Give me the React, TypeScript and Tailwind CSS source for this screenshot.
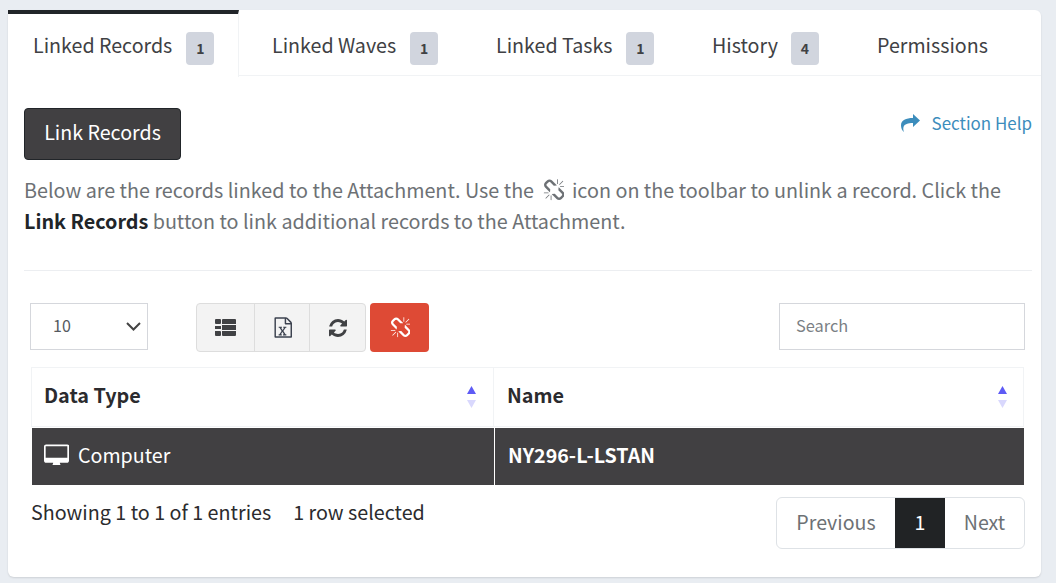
const font = { fontFamily: '"Noto Sans CJK SC", "Noto Sans", sans-serif' };

function UnlinkIcon({ className }: { className: string }) {
  return (
    <svg viewBox="0 0 1664 1792" fill="currentColor" className={className}>
      <path d="M503 1271l-256 256q-10 9-23 9-12 0-23-9-9-10-9-23t9-23l256-256q10-9 23-9t23 9q9 10 9 23t-9 23zm169 41v320q0 14-9 23t-23 9-23-9-9-23v-320q0-14 9-23t23-9 23 9 9 23zm-224-224q0 14-9 23t-23 9h-320q-14 0-23-9t-9-23 9-23 23-9h320q14 0 23 9t9 23zm1264 128q0 120-85 203l-147 146q-83 83-203 83-121 0-204-85l-334-335q-21-21-42-56l239-18 273 274q27 27 68 27.500t68-26.500l147-146q28-28 28-67 0-40-28-68l-274-275 18-239q35 21 56 42l336 336q84 86 84 204zm-617-724l-239 18-273-274q-28-28-68-28-39 0-68 27l-147 146q-28 28-28 67 0 40 28 68l274 274-18 240q-35-21-56-42l-336-336q-84-86-84-204 0-120 85-203l147-146q83-83 203-83 121 0 204 85l334 335q21 21 42 56zm633 84q0 14-9 23t-23 9h-320q-14 0-23-9t-9-23 9-23 23-9h320q14 0 23 9t9 23zm-544-544v320q0 14-9 23t-23 9-23-9-9-23v-320q0-14 9-23t23-9 23 9 9 23zm407 151l-256 256q-11 9-23 9t-23-9q-9-10-9-23t9-23l256-256q10-9 23-9t23 9q9 10 9 23t-9 23z" />
    </svg>
  );
}

function ShareIcon({ className }: { className: string }) {
  return (
    <svg viewBox="0 0 19 18" fill="currentColor" className={className}>
      <path d="M12 0 L19 6.500 L12 13 V9 C7 9 3.500 10 2.500 13 C2 15 2.500 17 3 18 C1 16.500 0 14 0 11.500 C0 6 5 4 12 4 Z" />
    </svg>
  );
}

function ListIcon({ className }: { className: string }) {
  return (
    <svg viewBox="0 0 21 17" fill="currentColor" className={className}>
      <path d="M0 1 a1 1 0 0 1 1-1 h4 a1 1 0 0 1 1 1 v3 a1 1 0 0 1-1 1 h-4 a1 1 0 0 1-1-1 z M0 7 h6 v3 h-6 z M0 12 h5 a1 1 0 0 1 1 1 v3 a1 1 0 0 1-1 1 h-4 a1 1 0 0 1-1-1 z M7 1 a1 1 0 0 1 1-1 h12 a1 1 0 0 1 1 1 v4 h-14 z M7 6 h14 v5 h-14 z M7 12 h14 v4 a1 1 0 0 1-1 1 h-12 a1 1 0 0 1-1-1 z" />
    </svg>
  );
}

function ExcelIcon({ className }: { className: string }) {
  return (
    <svg viewBox="0 0 1664 1792" fill="currentColor" className={className}>
      <path d="M1596 380q28 28 48 76t20 88v1152q0 40-28 68t-68 28h-1344q-40 0-68-28t-28-68v-1600q0-40 28-68t68-28h896q40 0 88 20t76 48zm-444-244v376h376q-10-29-22-41l-313-313q-12-12-41-22zm384 1528v-1024h-416q-40 0-68-28t-28-68v-416h-768v1536h1280zm-1043-181v106h281v-106h-75l103-161q5-7 10-16.500t7.500-13.500 3.500-4h2q1 4 5 10 2 4 4.500 7.500t6 8 6.500 8.500l107 161h-76v106h291v-106h-68l-192-273 195-282h67v-107h-279v107h74l-103 159q-4 7-10 16.500t-9 13.500l-2 3h-2q-1-4-5-10-6-11-17-23l-106-159h76v-107h-290v107h68l189 272-194 283h-68z" />
    </svg>
  );
}

function RefreshIcon({ className }: { className: string }) {
  return (
    <svg viewBox="128 128 1536 1536" fill="currentColor" className={className}>
      <path d="M1639 1056q0 5-1 7-64 268-268 434.500t-478 166.500q-146 0-282.500-55t-243.500-157l-129 129q-19 19-45 19t-45-19-19-45v-448q0-26 19-45t45-19h448q26 0 45 19t19 45-19 45l-137 137q71 66 161 102t187 36q134 0 250-65t186-179q11-17 53-117 8-23 30-23h192q13 0 22.500 9.500t9.500 22.500zm25-800v448q0 26-19 45t-45 19h-448q-26 0-45-19t-19-45 19-45l138-138q-148-137-349-137-134 0-250 65t-186 179q-11 17-53 117-8 23-30 23h-199q-13 0-22.500-9.500t-9.500-22.500v-7q65-268 270-434.500t480-166.500q146 0 284 55.500t245 156.500l130-129q19-19 45-19t45 19 19 45z" />
    </svg>
  );
}

function DesktopIcon({ className }: { className: string }) {
  return (
    <svg viewBox="0 0 1920 1536" fill="currentColor" className={className}>
      <path d="M1792 992v-832q0-13-9.500-22.500t-22.500-9.500h-1600q-13 0-22.500 9.500t-9.500 22.500v832q0 13 9.500 22.500t22.500 9.500h1600q13 0 22.500-9.500t9.500-22.500zm128-832v1088q0 66-47 113t-113 47h-544q0 37 16 77.500t32 71 16 43.500q0 26-19 45t-45 19h-512q-26 0-45-19t-19-45q0-14 16-44t32-70 16-78h-544q-66 0-113-47t-47-113v-1088q0-66 47-113t113-47h1632q66 0 113 47t47 113z" />
    </svg>
  );
}

function Tab({ label, count, active, gap = "ml-[14px]", className }: { label: string; count?: number; active?: boolean; gap?: string; className: string }) {
  return (
    <div
      className={
        "flex items-start text-[19.65px] leading-[30px] text-[#404144] " +
        (active ? "h-[67px] bg-white border-t-4 border-[#212529] border-r border-r-[#f1f3f5] pt-[16px] " : "h-[66px] border-b border-[#f1f3f5] pt-[20px] ") +
        className
      }
    >
      <span>{label}</span>
      {count !== undefined && (
        <span className={gap + " mt-[2px] flex h-[33px] w-[28px] items-center justify-center rounded-[4px] bg-[#d1d5de] pb-[1px] text-[14px] font-bold text-[#404144]"}>
          {count}
        </span>
      )}
    </div>
  );
}

function SortArrows() {
  return (
    <svg width="9" height="22" viewBox="0 0 9 22" className="shrink-0">
      <path d="M4.500 0 L9 8 H0 Z" fill="#5e5bf5" />
      <path d="M0 14 H9 L4.500 22 Z" fill="#d9d8fd" />
    </svg>
  );
}

export default function App() {
  return (
    <div style={font} className="h-[583px] w-[1056px] overflow-hidden bg-[#e9edf2] pl-[8px] pt-[10px]">
      <div className="h-[567px] w-[1033px] rounded-[6px] bg-white shadow-[0_1px_2px_rgba(0,0,0,0.12)]">
        <div className="flex h-[66px] items-start">
          <Tab active label="Linked Records" count={1} className="w-[231px] pl-[25px]" />
          <Tab label="Linked Waves" count={1} className="w-[224px] pl-[33px]" />
          <Tab label="Linked Tasks" count={1} className="w-[216px] pl-[33px]" />
          <Tab label="History" count={4} gap="ml-[13px]" className="w-[165px] pl-[33px]" />
          <Tab label="Permissions" className="flex-1 pl-[33px]" />
        </div>

        <div className="pl-[16px] pr-[9px]">
          <div className="mt-[32px] flex items-start justify-between">
            <button className="h-[52px] w-[157px] rounded-[4px] border border-[#212529] bg-[#414042] pb-[4px] text-[19.65px] leading-[30px] text-white">
              Link Records
            </button>
            <div className="mt-[3px] flex items-center text-[#3c8dbc]">
              <ShareIcon className="h-[18px] w-[19px]" />
              <span className="ml-[12px] text-[16.95px] leading-[24px]">Section Help</span>
            </div>
          </div>

          <p className="mt-[14px] text-[19.76px] leading-[31px] text-[#6d7175]">
            Below are the records linked to the Attachment. Use the{" "}
            <UnlinkIcon className="mx-[4px] inline h-[23px] w-[21px] align-[-4px] text-[#6d7175]" /> icon on the toolbar to unlink a record. Click the{" "}
            <b className="font-bold text-[#212529]">Link Records</b> button to link additional records to the Attachment.
          </p>

          <hr className="mt-[34px] border-t border-[#eceef1]" />

          <div className="mt-[32px] ml-[6px] mr-[7px] flex items-start">
            <div className="flex h-[47px] w-[118px] items-center justify-between border border-[#d5d7dc] pb-[3px] pl-[22px] pr-[6px] text-[16px] text-[#555a60]">
              <span>10</span>
              <svg width="15" height="9" viewBox="0 0 15 9" fill="none" stroke="#444" strokeWidth="2" className="mt-[3px]">
                <path d="M1 1 L7.500 7.500 L14 1" />
              </svg>
            </div>
            <div className="ml-[48px] flex h-[49px] overflow-hidden rounded-[4px] border border-[#dddddd] bg-[#f3f3f3] text-[#404144]">
              <div className="flex w-[58px] items-center justify-center border-r border-[#dddddd]"><ListIcon className="h-[17px] w-[21px]" /></div>
              <div className="flex w-[55px] items-center justify-center border-r border-[#dddddd]"><ExcelIcon className="h-[21px] w-[19px] text-[#3d4350]" /></div>
              <div className="flex w-[55px] items-center justify-center"><RefreshIcon className="h-[18px] w-[18px]" /></div>
            </div>
            <div className="ml-[4px] flex h-[49px] w-[59px] items-center justify-center rounded-[4px] bg-[#de4a35] text-white">
              <UnlinkIcon className="h-[22px] w-[20px]" />
            </div>
            <div className="ml-auto flex h-[47px] w-[246px] items-center border border-[#d5d7dc] pb-[3px] pl-[16px] text-[16.4px] text-[#7b7f85]">
              Search
            </div>
          </div>

          <div className="ml-[7px] mr-[8px] mt-[15px]">
            <div className="flex h-[60px] border border-[#f1f3f5] text-[19.8px] font-bold text-[#2b2b2e]">
              <div className="flex w-[462px] items-center justify-between border-r border-[#f1f3f5] pb-[4px] pl-[12px] pr-[17px]">
                <span>Data Type</span>
                <span className="pt-[4px]"><SortArrows /></span>
              </div>
              <div className="flex flex-1 items-center justify-between pb-[4px] pl-[13px] pr-[16px]">
                <span>Name</span>
                <span className="pt-[4px]"><SortArrows /></span>
              </div>
            </div>
            <div className="ml-[1px] mt-[1px] flex h-[57px] bg-[#414042] text-[19.65px] text-white">
              <div className="flex w-[463px] items-center border-r border-white pb-[3px] pl-[12px]">
                <DesktopIcon className="mt-[-2px] h-[21px] w-[25px]" />
                <span className="ml-[9px]">Computer</span>
              </div>
              <div className="flex flex-1 items-center pb-[3px] pl-[13px] font-bold">NY296-L-LSTAN</div>
            </div>
          </div>

          <div className="ml-[7px] mr-[7px] mt-[12px] flex items-start justify-between">
            <div className="flex text-[19.72px] leading-[30px] text-[#2b2b2e]">
              <span>Showing 1 to 1 of 1 entries</span>
              <span className="ml-[22px]">1 row selected</span>
            </div>
            <div className="flex h-[52px] w-[249px] overflow-hidden rounded-[6px] border border-[#dee2e6] text-[19.6px] text-[#6d7175]">
              <div className="flex w-[118px] items-center justify-center pb-[3px]">Previous</div>
              <div className="flex w-[50px] items-center justify-center bg-[#212325] pb-[3px] text-white">1</div>
              <div className="flex flex-1 items-center justify-center pb-[3px]">Next</div>
            </div>
          </div>
        </div>
      </div>
    </div>
  );
}
